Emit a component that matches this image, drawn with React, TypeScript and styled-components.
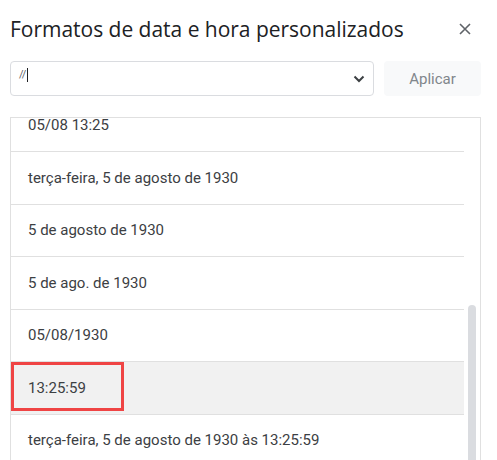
import React, { useLayoutEffect, useRef } from "react";
import styled, { createGlobalStyle } from "styled-components";

const GlobalStyle = createGlobalStyle`
  html, body {
    margin: 0;
    background: #ffffff;
    font-family: Roboto, "Liberation Sans", Arial, sans-serif;
    overflow: hidden;
  }
`;

const Dialog = styled.div`
  width: 497px;
  height: 460px;
  box-sizing: border-box;
  padding: 14px 16px 0 10px;
  display: flex;
  flex-direction: column;
  overflow: hidden;
`;

const TitleRow = styled.div`
  display: flex;
  align-items: center;
  justify-content: space-between;
  height: 30px;
`;

const Title = styled.h1`
  margin: 0;
  font-family: "Open Sans", Roboto, sans-serif;
  font-weight: 400;
  font-size: 21px;
  letter-spacing: -0.02px;
  color: #202124;
`;

const CloseButton = styled.button`
  border: 0;
  background: transparent;
  padding: 0;
  width: 24px;
  height: 24px;
  margin-right: 4px;
  display: flex;
  align-items: center;
  justify-content: center;
  color: #5f6368;
`;

const Controls = styled.div`
  display: flex;
  gap: 10px;
  margin-top: 17px;
  height: 35px;
`;

const Select = styled.div`
  flex: 1;
  box-sizing: border-box;
  border: 1px solid #dadce0;
  border-radius: 4px;
  display: flex;
  align-items: center;
  padding: 0 8px 0 8px;
`;

const InputText = styled.span`
  flex: 1;
  display: flex;
  align-items: center;
  font-size: 11px;
  color: #5f6368;
  margin-top: -8px;
  letter-spacing: -0.5px;
`;

const Caret = styled.span`
  display: inline-block;
  width: 1px;
  height: 14px;
  background: #202124;
  margin-left: 1px;
`;

const ApplyButton = styled.button`
  width: 97px;
  border: 0;
  border-radius: 4px;
  background: #f8f9fa;
  color: #80868b;
  font-family: Roboto, sans-serif;
  font-size: 15px;
  padding: 0;
`;

const List = styled.div`
  margin-top: 21px;
  flex: 1;
  display: flex;
  border: 1px solid #e0e0e0;
  border-bottom: 0;
  min-height: 0;
`;

const Viewport = styled.div`
  flex: 1;
  overflow: hidden;
`;

const Row = styled.div<{ $active?: boolean }>`
  position: relative;
  height: 52.5px;
  box-sizing: border-box;
  border-bottom: 1px solid #e0e0e0;
  display: flex;
  align-items: center;
  padding-left: 17px;
  font-size: 15px;
  color: #3c4043;
  background: ${({ $active }) => ($active ? "#f1f1f1" : "#ffffff")};
`;

const Highlight = styled.span`
  position: absolute;
  left: 0;
  top: 0;
  width: 113px;
  height: 49px;
  box-sizing: border-box;
  border: 3px solid #ef4444;
`;

const Track = styled.div`
  width: 16px;
  display: flex;
  flex-direction: column;
  align-items: center;
  padding-top: 187px;
`;

const Thumb = styled.div`
  width: 8px;
  flex: 1;
  background: #dadce0;
  border-radius: 4px 4px 0 0;
`;

const formats = [
  { label: "5 de agosto de 1930 13:25:59" },
  { label: "terça-feira, 5 de agosto de 1930 13:25" },
  { label: "05/08/1930 13:25:59" },
  { label: "05/08 13:25" },
  { label: "terça-feira, 5 de agosto de 1930" },
  { label: "5 de agosto de 1930" },
  { label: "5 de ago. de 1930" },
  { label: "05/08/1930" },
  { label: "13:25:59", active: true },
  { label: "terça-feira, 5 de agosto de 1930 às 13:25:59" },
  { label: "1930" },
];

const CloseIcon = () => (
  <svg width="12" height="12" viewBox="0 0 12 12">
    <path d="M1 1 L11 11 M11 1 L1 11" stroke="currentColor" strokeWidth="1.6" />
  </svg>
);

const ChevronIcon = () => (
  <svg width="12" height="8" viewBox="0 0 12 8">
    <path d="M1.5 1.5 L6 6 L10.5 1.5" fill="none" stroke="#3c4043" strokeWidth="2" />
  </svg>
);

export default function App() {
  const viewportRef = useRef<HTMLDivElement>(null);

  useLayoutEffect(() => {
    if (viewportRef.current) viewportRef.current.scrollTop = 176;
  }, []);

  return (
    <>
      <GlobalStyle />
      <Dialog>
        <TitleRow>
          <Title>Formatos de data e hora personalizados</Title>
          <CloseButton aria-label="Fechar">
            <CloseIcon />
          </CloseButton>
        </TitleRow>
        <Controls>
          <Select>
            <InputText>
              //
              <Caret />
            </InputText>
            <ChevronIcon />
          </Select>
          <ApplyButton>Aplicar</ApplyButton>
        </Controls>
        <List>
          <Viewport ref={viewportRef}>
            {formats.map((f) => (
              <Row key={f.label} $active={f.active}>
                {f.active && <Highlight />}
                {f.label}
              </Row>
            ))}
          </Viewport>
          <Track>
            <Thumb />
          </Track>
        </List>
      </Dialog>
    </>
  );
}
